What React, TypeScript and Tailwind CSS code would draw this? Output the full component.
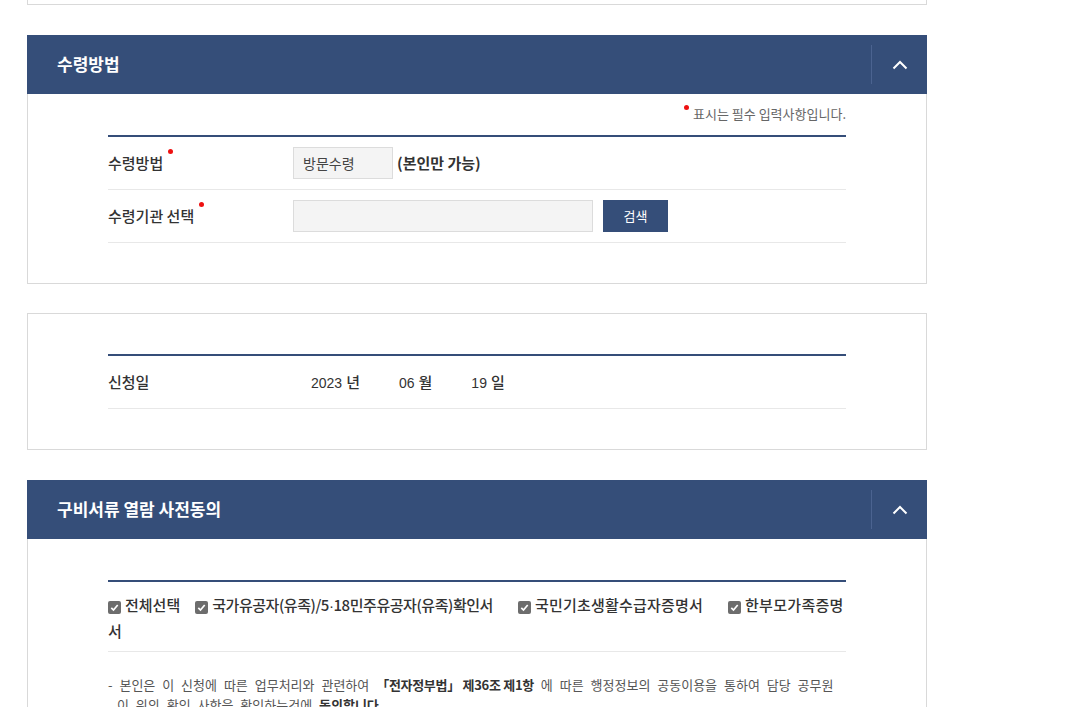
import React from "react";

const KR = { fontFamily: '"Noto Sans CJK KR", "Noto Sans", sans-serif' } as const;
const LAT = { fontFamily: '"Liberation Sans", Arial, sans-serif' } as const;

function Dot({ className = "" }: { className?: string }) {
  return <span className={`absolute w-[5px] h-[5px] rounded-full bg-[#ee1111] ${className}`} />;
}

function Chevron() {
  return (
    <svg width="16" height="10" viewBox="0 0 16 10" fill="none">
      <polyline points="1.5,8.5 8,2 14.5,8.5" stroke="#ffffff" strokeWidth="2" />
    </svg>
  );
}

function Header({ title }: { title: string }) {
  return (
    <div className="h-[59px] bg-[#354e79] flex items-center">
      <div className="flex-1 pl-[30px] text-white font-bold text-[17px] leading-[24px] -mt-[1px]">{title}</div>
      <div className="w-[56px] h-[39px] border-l border-[#4b6390] flex items-center justify-center">
        <Chevron />
      </div>
    </div>
  );
}

function Check() {
  return (
    <span className="inline-flex w-[13px] h-[13px] rounded-[2px] bg-[#6d6d6d] items-center justify-center align-[-1px] mr-[4px]">
      <svg width="9" height="9" viewBox="0 0 9 9" fill="none">
        <polyline points="1.3,4.8 3.5,7 7.7,2" stroke="#ffffff" strokeWidth="1.7" />
      </svg>
    </span>
  );
}

export default function App() {
  return (
    <div className="bg-white min-h-[707px] pl-[27px] text-[#333]" style={KR}>
      <div className="w-[900px]">
        <div className="h-[5px] border-x border-b border-[#d9d9d9]" />

        {/* 수령방법 */}
        <div className="mt-[30px]">
          <Header title="수령방법" />
          <div className="border-x border-b border-[#d9d9d9] px-[80px] pt-[10px] pb-[40px]">
            <div className="h-[20px] leading-[20px] flex justify-end text-[13px] text-[#666]">
              <span className="relative pl-[9px]">
                <Dot className="left-0 top-[1px]" />
                표시는 필수 입력사항입니다.
              </span>
            </div>
            <div className="mt-[11px] border-t-2 border-[#354e79]">
              <div className="h-[53px] border-b border-[#e8e8e8] flex items-center">
                <div className="w-[185px] text-[15px] font-medium">
                  <span className="relative">
                    수령방법
                    <Dot className="-right-[10px] -top-[3px]" />
                  </span>
                </div>
                <div className="w-[100px] h-[32px] bg-[#f4f4f4] border border-[#dcdcdc] flex items-center pl-[9px] text-[14px] text-[#444]">
                  방문수령
                </div>
                <div className="ml-[4px] text-[15px] font-semibold">(본인만 가능)</div>
              </div>
              <div className="h-[53px] border-b border-[#e8e8e8] flex items-center">
                <div className="w-[185px] text-[15px] font-medium">
                  <span className="relative">
                    수령기관 선택
                    <Dot className="-right-[10px] -top-[3px]" />
                  </span>
                </div>
                <div className="w-[300px] h-[32px] bg-[#f4f4f4] border border-[#dcdcdc]" />
                <button className="ml-[10px] w-[65px] h-[32px] bg-[#354e79] text-white text-[13px] flex items-center justify-center">
                  검색
                </button>
              </div>
            </div>
          </div>
        </div>

        {/* 신청일 */}
        <div className="mt-[29px] border border-[#d9d9d9] px-[80px] pt-[40px] pb-[40px]">
          <div className="border-t-2 border-[#354e79]">
            <div className="h-[53px] border-b border-[#e8e8e8] flex items-center">
              <div className="w-[185px] text-[15px] font-medium">신청일</div>
              <div className="flex items-center gap-[39px] ml-[18px] text-[14px]">
                <span>
                  <span style={LAT}>2023</span>
                  <span className="ml-[4px] text-[15px] font-medium">년</span>
                </span>
                <span>
                  <span style={LAT}>06</span>
                  <span className="ml-[4px] text-[15px] font-medium">월</span>
                </span>
                <span>
                  <span style={LAT}>19</span>
                  <span className="ml-[4px] text-[15px] font-medium">일</span>
                </span>
              </div>
            </div>
          </div>
        </div>

        {/* 구비서류 열람 사전동의 */}
        <div className="mt-[30px]">
          <Header title="구비서류 열람 사전동의" />
          <div className="border-x border-[#d9d9d9] px-[80px] pt-[41px] h-[200px]">
            <div className="border-t-2 border-[#354e79]">
              <div className="pt-[10px] pb-[8px] border-b border-[#e8e8e8] text-[15px] leading-[25px] font-medium">
                <span className="mr-[15px]"><Check />전체선택</span>
                <span className="mr-[25px] tracking-[-0.45px]">
                  <Check />국가유공자(유족)/5<span style={LAT}>·</span>18민주유공자(유족)확인서
                </span>
                <span className="mr-[25px] tracking-[0.2px]"><Check />국민기초생활수급자증명서</span>
                <span className="tracking-[0.3px]"><Check />한부모가족증명</span>
                <br />
                <span>서</span>
              </div>
              <div className="mt-[23px] text-[13px] leading-[20px] text-[#555] [word-spacing:4px] pl-[9px] -indent-[9px]">
                - 본인은 이 신청에 따른 업무처리와 관련하여 <b className="text-[#333] [word-spacing:0px] tracking-[-0.3px]">「전자정부법」 제36조 제1항</b> 에 따른 행정정보의 공동이용을 통하여 담당 공무원
                <br />
                이 위의 확인 사항을 확인하는것에 <b className="text-[#333]">동의합니다.</b>
              </div>
            </div>
          </div>
        </div>
      </div>
    </div>
  );
}
